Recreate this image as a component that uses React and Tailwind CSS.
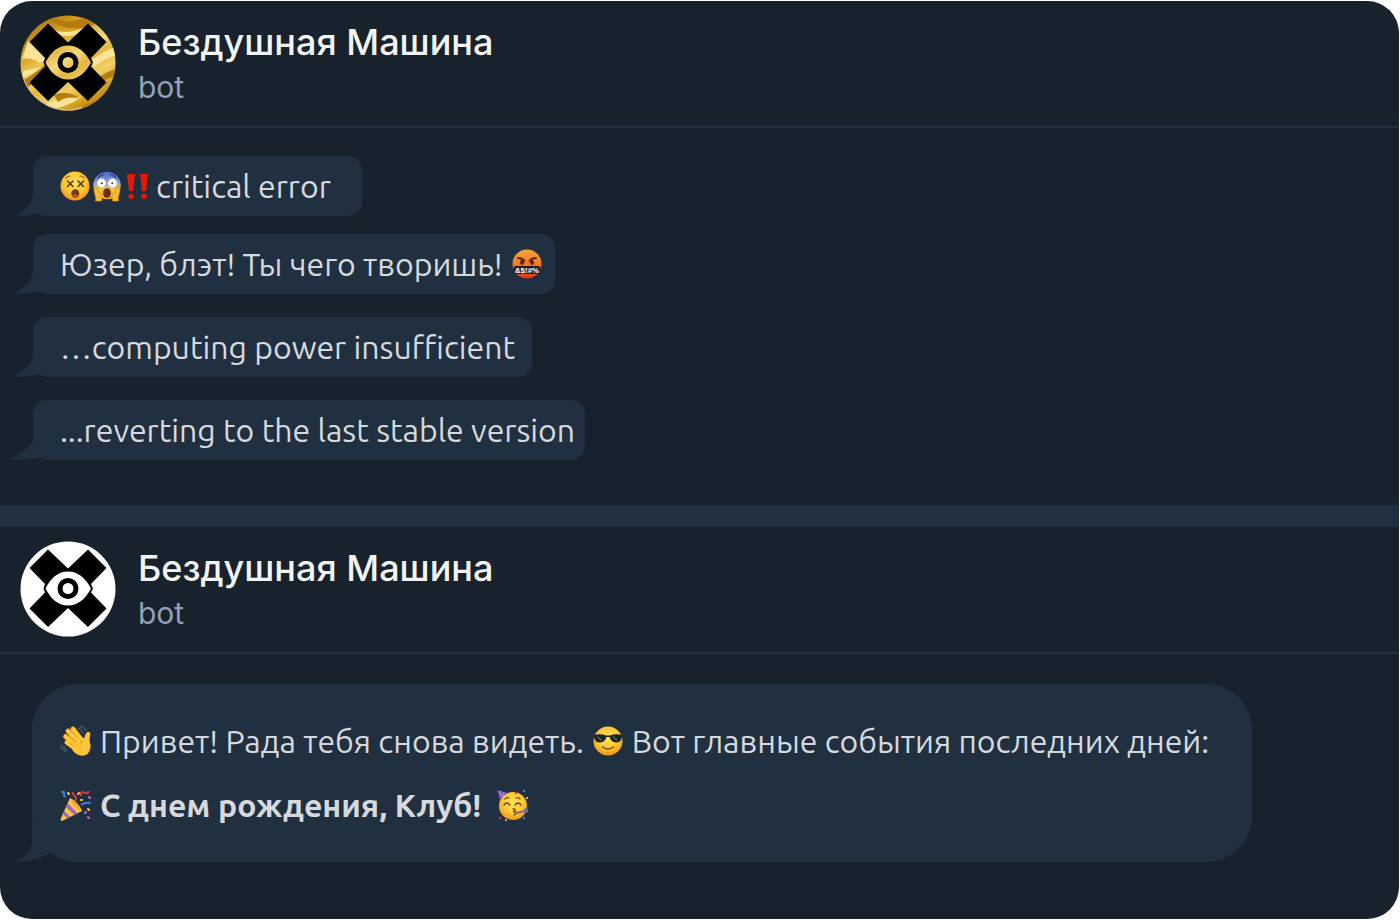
import React from 'react';

function Emoji({ label, children }) {
  return (
    <svg role="img" aria-label={label} viewBox="0 0 32 32" className="w-8 h-8 shrink-0">
      <defs>
        <radialGradient id="face" cx="50%" cy="40%" r="60%">
          <stop offset="0" stopColor="#ffe25a" />
          <stop offset="0.6" stopColor="#fdc835" />
          <stop offset="1" stopColor="#ee9417" />
        </radialGradient>
        <linearGradient id="scream" x1="0" y1="0" x2="0" y2="1">
          <stop offset="0" stopColor="#4264c8" />
          <stop offset="0.4" stopColor="#8ea5cf" />
          <stop offset="0.65" stopColor="#fbc63a" />
          <stop offset="1" stopColor="#f3a522" />
        </linearGradient>
        <linearGradient id="rage" x1="0" y1="0" x2="0" y2="1">
          <stop offset="0" stopColor="#f9a63a" />
          <stop offset="0.5" stopColor="#f07a26" />
          <stop offset="1" stopColor="#dc3222" />
        </linearGradient>
      </defs>
      {children}
    </svg>
  );
}

function Dizzy() {
  return (
    <Emoji label="😵">
      <circle cx="15" cy="16" r="14.5" fill="url(#face)" />
      <path d="M6 8q2-2 4-2M20 6q3 0 4 2" stroke="#a5671a" strokeWidth="1.2" fill="none" strokeLinecap="round" />
      <path d="M7.5 11l5.500 5.500M13 11l-5.500 5.500M18 11l5.500 5.500M23.500 11L18 16.500" stroke="#5b3510" strokeWidth="1.500" strokeLinecap="round" />
      <ellipse cx="15.300" cy="23.500" rx="4" ry="4.300" fill="#71370f" />
      <path d="M12.500 25.500q2.800-2.500 5.600 0q-2.800 3.400-5.600 0" fill="#b75b27" />
    </Emoji>
  );
}

function Scream() {
  return (
    <Emoji label="😱">
      <circle cx="15" cy="15.500" r="13.700" fill="url(#scream)" />
      <path d="M6 8q2-3 5-3M19 5q3 0 5 3" stroke="#2e4793" strokeWidth="1.300" fill="none" strokeLinecap="round" />
      <circle cx="9.500" cy="13" r="4.400" fill="#fff" />
      <circle cx="20.500" cy="13" r="4.400" fill="#fff" />
      <circle cx="9.800" cy="13.300" r="1" fill="#49311f" />
      <circle cx="20.200" cy="13.300" r="1" fill="#49311f" />
      <ellipse cx="15" cy="23" rx="3.900" ry="4.800" fill="#67300e" />
      <path d="M2.500 17q2-1.500 3 2l2 4q3 1 2.500 4l-.5 4H3.500q1-3-.5-6q-1.500-4-.5-8zM27.500 17q-2-1.500-3 2l-2 4q-3 1-2.500 4l.5 4h6q-1-3 .5-6q1.500-4 .5-8z" fill="#f7bd36" stroke="#d68a18" strokeWidth="0.700" />
    </Emoji>
  );
}

function Bangs() {
  return (
    <Emoji label="‼️">
      <path d="M3 4h8l-2 17H5zM16 4h8l-2 17h-4z" fill="#e5190b" />
      <circle cx="7" cy="26.500" r="2.700" fill="#e5190b" />
      <circle cx="20" cy="26.500" r="2.700" fill="#e5190b" />
    </Emoji>
  );
}

function Rage() {
  return (
    <Emoji label="🤬">
      <circle cx="16" cy="16" r="14.500" fill="url(#rage)" />
      <path d="M7 10q4 0 6.500 3M25 10q-4 0-6.500 3" stroke="#6b2208" strokeWidth="1.800" fill="none" strokeLinecap="round" />
      <ellipse cx="11" cy="14.500" rx="1.900" ry="2.400" fill="#5a210b" />
      <ellipse cx="21" cy="14.500" rx="1.900" ry="2.400" fill="#5a210b" />
      <rect x="2.500" y="18" width="27" height="8" rx="2.500" fill="#241e23" />
      <text x="16" y="25" textAnchor="middle" fontSize="8" fontWeight="700" fontFamily="Liberation Sans, sans-serif" fill="#fff">&amp;$!#%</text>
    </Emoji>
  );
}

function Wave() {
  return (
    <Emoji label="👋">
      <g stroke="#dc9520" strokeLinecap="round" strokeWidth="5">
        <path d="M7 17.500L16 24M5.500 11.500L17 21M8 6L20 19M13 4L23 17" />
      </g>
      <g stroke="#fdc83a" strokeLinecap="round" strokeWidth="4">
        <path d="M7 17.500L16 24M5.500 11.500L17 21M8 6L20 19M13 4L23 17" />
      </g>
      <path d="M13 17L22 12Q24 15 25 11Q26 6.500 29 7Q31 7.500 30 11Q29 15 30.500 20Q31 27 26 30Q20 32.500 14 27Q10 23 13 17Z" fill="#fdc535" />
      <path d="M10 18l3 2.500M11 12.500l5 4.500M13.500 8l4.500 5M22 15q-2 2-1 5" stroke="#dc9520" strokeWidth="0.900" fill="none" strokeLinecap="round" />
      <path d="M18 3q4 1 5 5M20 1q5 1.500 6 5M1 20q0 5 5 6.500M3.500 21q.5 3 3.500 4" stroke="#667483" strokeWidth="0.900" fill="none" strokeLinecap="round" />
    </Emoji>
  );
}

function Cool() {
  return (
    <Emoji label="😎">
      <circle cx="16" cy="16" r="14.500" fill="url(#face)" />
      <path d="M2 10q7-1.500 12 .5h4q5-2 12-.5v2q-1 5-5 5.500q-6 0-7.500-5.500h-3Q13 17.500 7 17.500Q3 17 2 12z" fill="#1c2326" />
      <path d="M5.500 11.500l4 4M21 11.500l4 4" stroke="#4b6460" strokeWidth="1.500" />
      <path d="M10.500 22q5.500 4 11 0" stroke="#70400e" strokeWidth="1.500" fill="none" strokeLinecap="round" />
    </Emoji>
  );
}

function Popper() {
  return (
    <Emoji label="🎉">
      <path d="M10 9Q19 14 22 22L2 32Q0 32 1 29Z" fill="#f8c540" />
      <path d="M7.500 14l10 10.500l-3 1.500L6 18zM4 22l6.500 6l-3 1.500L3 25z" fill="#a065b5" />
      <path d="M10 9Q18 13 22 22Q13 18 10 9" fill="#f3a936" />
      <path d="M15 12q2-3 0-5q-3-2-2-4M21 7q-1-4 2-4q4 3 6-1" stroke="#d5354e" strokeWidth="2" fill="none" />
      <path d="M1 3l3 0v4l2 1M21 16q4-3 10-2" stroke="#397fda" strokeWidth="1.900" fill="none" />
      <path d="M8 4l1 1M18 5l1-1M28 20l1 1M21 11l1 0" stroke="#fccf3e" strokeWidth="2" strokeLinecap="round" />
      <path d="M25 24l1-1M28 28l1 1M29 8l1 1" stroke="#bc70c9" strokeWidth="2" strokeLinecap="round" />
    </Emoji>
  );
}

function Party() {
  return (
    <Emoji label="🥳">
      <circle cx="16" cy="17" r="14" fill="url(#face)" />
      <path d="M0 1L11 4Q6 6 3 11Z" fill="#7655bd" />
      <path d="M3 2l1 5M7 3l-2 5" stroke="#aa89db" strokeWidth="1.300" />
      <path d="M7 16q3-4 6 0M18 16q3-4 6 0M8 10q2-2 4-1M19 9q3-1 4 1" stroke="#70400e" strokeWidth="1.300" fill="none" strokeLinecap="round" />
      <path d="M16 20q4 0 1 2.500q4 1 0 3.500" stroke="#70400e" strokeWidth="1.300" fill="none" strokeLinecap="round" />
      <path d="M19 24l9-2" stroke="#8a6585" strokeWidth="2" />
      <circle cx="29" cy="21.500" r="2.200" fill="#5a72be" />
      <circle cx="19" cy="4" r="1.200" fill="#d5354e" />
      <circle cx="27" cy="2" r="1.200" fill="#397fda" />
      <circle cx="30" cy="9" r="1.100" fill="#f4d45a" />
      <circle cx="3" cy="29" r="1.200" fill="#d5354e" />
      <circle cx="9" cy="31" r="1" fill="#f4d45a" />
      <circle cx="27" cy="29" r="1.200" fill="#397fda" />
    </Emoji>
  );
}

function Avatar({ gold }) {
  const fill = gold ? 'url(#gold)' : '#fff';
  return (
    <svg viewBox="0 0 96 96" className="w-24 h-24 shrink-0" aria-hidden="true">
      <defs>
        <linearGradient id="gold" gradientUnits="userSpaceOnUse" x1="20" y1="0" x2="80" y2="96">
          <stop offset="0" stopColor="#a8740c" />
          <stop offset="0.15" stopColor="#c8921a" />
          <stop offset="0.3" stopColor="#e0b032" />
          <stop offset="0.46" stopColor="#f3da7e" />
          <stop offset="0.56" stopColor="#e3b640" />
          <stop offset="0.7" stopColor="#f0d068" />
          <stop offset="0.85" stopColor="#cf991c" />
          <stop offset="1" stopColor="#b27d10" />
        </linearGradient>
        <clipPath id="disc">
          <circle cx="48" cy="48" r="47.500" />
        </clipPath>
      </defs>
      <circle cx="48" cy="48" r="47.500" fill={fill} />
      {gold && (
        <g clipPath="url(#disc)">
          <path d="M30 6Q52 20 78 8L66 2Q48 10 34 3ZM2 66Q16 58 24 50L27 54Q14 68 6 74ZM76 64Q88 56 96 54V60Q86 64 79 69Z" fill="#b67d0e" />
          <path d="M8 26Q22 36 26 44L20 48Q12 42 2 44ZM34 15Q50 20 66 12L60 18Q48 24 38 19ZM70 46Q84 36 95 32L96 40Q84 44 74 52ZM24 90Q44 80 62 82Q50 90 34 94ZM3 56Q12 54 22 52Q12 60 3 62Z" fill="#fae596" />
          <path d="M34 80Q48 74 60 84Q48 80 38 87ZM62 92Q76 84 90 80L86 86Q74 90 66 96Z" fill="#b67d0e" />
          <path d="M1 54A47 47 0 0 0 62 93" fill="none" stroke="#d3b9a0" strokeWidth="2" />
        </g>
      )}
      <path d="M28 8.500L48 27.500L68 8.500L86.500 27L71 43L73 47.500L71 51.500L86.500 67.500L68 86L48 67L28 86L9.500 67.500L25 51.500L23.500 47.500L25 43L9.500 27Z" fill="#000" />
      <path d="M25.500 47.500Q34 30.500 48 30.500T71 47.500Q62 64.500 48 64.500T25.500 47.500Z" fill={fill} />
      <circle cx="48" cy="47.500" r="8" fill={fill} stroke="#000" strokeWidth="5" />
    </svg>
  );
}

function ChatHeader({ gold }) {
  return (
    <header className="flex h-[127px] gap-[22px] border-b-2 border-[#203040] pl-5 pt-[14px]">
      <Avatar gold={gold} />
      <div className="font-['Inter',sans-serif]">
        <h2 className="text-[36px] leading-[54px] font-medium text-[#f4f5f7]">Бездушная Машина</h2>
        <p className="text-[30px] leading-9 text-[#91a1b5]">bot</p>
      </div>
    </header>
  );
}

function Bubble({ className, tail, children }) {
  return (
    <div className={`relative flex h-[60px] items-center rounded-[14px] bg-[#203040] pl-[27px] whitespace-nowrap ${className}`}>
      <svg viewBox="0 0 36 24" preserveAspectRatio="none" className={`absolute bottom-0 h-6 ${tail}`} aria-hidden="true">
        <path d="M18 0V4Q16 13 0 23.500Q14 23.500 22 21.500L36 24V0Z" fill="#203040" />
      </svg>
      <div className="relative flex items-center">{children}</div>
    </div>
  );
}

function App() {
  return (
    <div className="min-h-screen bg-white py-px pr-px">
      <main className="overflow-hidden rounded-[32px] bg-[#18222c] font-['Ubuntu','Noto_Sans',sans-serif] text-[32px] leading-10 text-[#d6d9de]">
        <section>
          <ChatHeader gold />
          <div className="flex flex-col items-start gap-[23px] pt-7 pb-[45px] pl-[33px]">
            <div className="flex flex-col items-start gap-[18px]">
              <Bubble className="w-[329px]" tail="-left-4 w-8">
                <Dizzy />
                <Scream />
                <Bangs />
                <span>critical error</span>
              </Bubble>
              <Bubble className="w-[522px]" tail="-left-[18px] w-9">
                <span className="mr-2">Юзер, блэт! Ты чего творишь!</span>
                <Rage />
              </Bubble>
            </div>
            <Bubble className="w-[499px]" tail="-left-5 w-10">…computing power insufficient</Bubble>
            <Bubble className="w-[552px]" tail="-left-6 w-12">...reverting to the last stable version</Bubble>
          </div>
        </section>
        <section className="border-t-[22px] border-[#203040]">
          <ChatHeader />
          <div className="pt-[30px] pb-[57px] pl-8">
            <div className="relative flex w-[1220px] max-w-full flex-col justify-center gap-6 rounded-[46px] bg-[#203040] py-[37px] pl-7 whitespace-nowrap">
              <svg viewBox="0 0 34 40" className="absolute bottom-0 -left-4 w-[34px] h-10" aria-hidden="true">
                <path d="M16 0V22Q13 33 1 39.500Q20 40 33 31V0Z" fill="#203040" />
              </svg>
              <p className="relative flex items-center gap-2">
                <Wave />
                <span>Привет! Рада тебя снова видеть.</span>
                <Cool />
                <span>Вот главные события последних дней:</span>
              </p>
              <p className="relative flex items-center gap-2 font-bold">
                <Popper />
                <span className="mr-2">С днем рождения, Клуб!</span>
                <Party />
              </p>
            </div>
          </div>
        </section>
      </main>
    </div>
  );
}

export default App;
